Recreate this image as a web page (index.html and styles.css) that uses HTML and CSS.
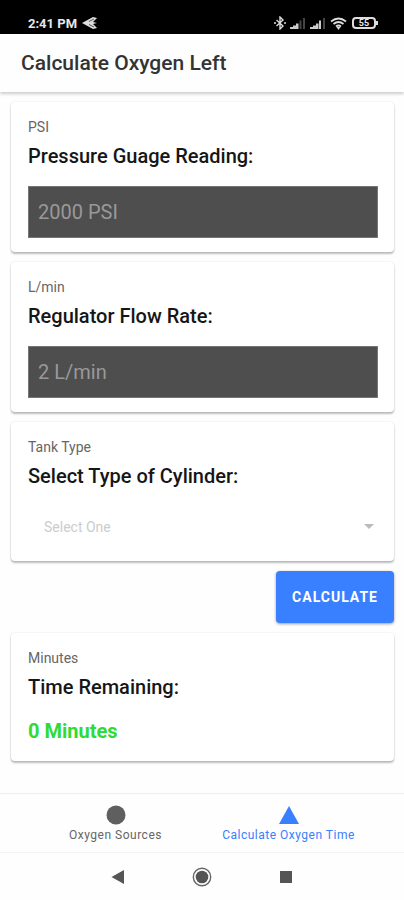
FILE: index.html
```html
<!DOCTYPE html>
<html lang="en">
<head>
<meta charset="utf-8">
<meta name="viewport" content="width=device-width, initial-scale=1">
<title>Calculate Oxygen Left</title>
<link rel="stylesheet" href="styles.css">
</head>
<body>
<div class="status">
  <span class="clock">2:41 PM</span>
  <svg class="plane" width="16" height="14" viewBox="0 0 16 14" aria-hidden="true"><path d="M0 7 11 1l4 1-4 4 4 1-4 1 4 4-4 1z" fill="#ddd"/><path d="M7 5.500 12 3M7 8.500 12 11" stroke="#555" stroke-width="1"/></svg>
  <div class="status-icons">
    <svg width="12" height="14" viewBox="0 0 12 14" aria-hidden="true"><path d="M2.500 4 9 10 6 13V1l3 3-6.500 6" fill="none" stroke="#ddd" stroke-width="1.400"/><path d="M0 7h2M10 7h2" stroke="#ddd" stroke-width="1.500"/></svg>
    <svg width="16" height="12" viewBox="0 0 16 12" aria-hidden="true"><path d="M0 12v-2h3v2zM3 12V8.500h3V12zM6 12V6.500h2.500V12z" fill="#ccc"/><path d="M9.500 12V3.500h2V12zM13 12V1h2v11z" fill="#444"/></svg>
    <svg width="16" height="12" viewBox="0 0 16 12" aria-hidden="true"><path d="M0 12v-2h3v2zM3 12V8.500h3V12zM6 12V6.500h2.500V12zM9 12V3.500h2V12z" fill="#ccc"/><path d="M13 12V1h2v11z" fill="#444"/></svg>
    <svg width="17" height="13" viewBox="0 0 17 13" aria-hidden="true"><path d="M1 4.500q7.500-6 15 0M3.500 7q5-4 10 0M6 9.500q2.500-2 5 0" fill="none" stroke="#ddd" stroke-width="1.800"/><path d="m6.500 10 2 3 2-3z" fill="#ddd"/></svg>
    <span class="battery">55</span>
  </div>
</div>
<header class="toolbar"><h1>Calculate Oxygen Left</h1></header>
<main>
  <section class="card">
    <p class="sub">PSI</p>
    <label class="title" for="psi">Pressure Guage Reading:</label>
    <input class="field" id="psi" type="text" inputmode="numeric" placeholder="2000 PSI">
  </section>
  <section class="card">
    <p class="sub">L/min</p>
    <label class="title" for="flow">Regulator Flow Rate:</label>
    <input class="field" id="flow" type="text" inputmode="numeric" placeholder="2 L/min">
  </section>
  <section class="card">
    <p class="sub">Tank Type</p>
    <label class="title" for="tank">Select Type of Cylinder:</label>
    <div class="select-row">
      <select id="tank"><option>Select One</option></select>
      <svg class="caret" width="10" height="5" viewBox="0 0 10 5" aria-hidden="true"><path d="M0 0h10L5 5z" fill="#bbb"/></svg>
    </div>
  </section>
  <button class="calculate" type="button">CALCULATE</button>
  <section class="card">
    <p class="sub">Minutes</p>
    <h2 class="title">Time Remaining:</h2>
    <output class="result" for="psi flow tank">0 Minutes</output>
  </section>
</main>
<nav class="tabs">
  <a class="tab" href="#sources">
    <svg width="20" height="20" viewBox="0 0 20 20" aria-hidden="true"><circle cx="10" cy="10" r="9.500" fill="#5f5f5f"/></svg>
    Oxygen Sources
  </a>
  <a class="tab active" href="#time">
    <svg width="20" height="20" viewBox="0 0 20 20" aria-hidden="true"><path d="M10 1 20 19H0z" fill="#3880ff"/></svg>
    Calculate Oxygen Time
  </a>
</nav>
<div class="system">
  <button type="button" aria-label="Back"><svg width="20" height="20" viewBox="0 0 20 20"><path d="M3.500 10 16 3v14z" fill="#555"/></svg></button>
  <button type="button" aria-label="Home"><svg width="20" height="20" viewBox="0 0 20 20"><circle cx="10" cy="10" r="8.700" fill="none" stroke="#666" stroke-width="1.400"/><circle cx="10" cy="10" r="6.300" fill="#555"/></svg></button>
  <button type="button" aria-label="Recent apps"><svg width="20" height="20" viewBox="0 0 20 20"><path d="M4 4h12v12H4z" fill="#555"/></svg></button>
</div>
</body>
</html>
```
FILE: styles.css
```css
* {
  box-sizing: border-box;
}

body {
  margin: 0;
  min-height: 100vh;
  display: flex;
  flex-direction: column;
  background: #fefefe;
  color: #161616;
  font-family: Roboto, "Liberation Sans", sans-serif;
}

h1, h2, p {
  margin: 0;
}

button {
  border: 0;
  font-family: inherit;
}

.status {
  height: 34px;
  padding: 12px 26px 0 28px;
  display: flex;
  align-items: center;
  background: #000;
  color: #e8e8e8;
}

.clock {
  font-size: 13px;
  font-weight: 700;
}

.plane {
  margin-left: 5px;
}

.status-icons {
  margin-left: auto;
  display: flex;
  align-items: center;
  gap: 4px;
}

.battery {
  position: relative;
  width: 24px;
  height: 12px;
  margin: 0 2px 0 1px;
  border: 2px solid #ddd;
  border-radius: 4px;
  font-size: 9px;
  font-weight: 700;
  line-height: 8px;
  text-align: center;
}

.battery::after {
  content: "";
  position: absolute;
  top: 2px;
  right: -4px;
  width: 2px;
  height: 4px;
  background: #ddd;
}

.toolbar {
  height: 58px;
  padding: 0 21px;
  display: flex;
  align-items: center;
  box-shadow: 0 2px 3px rgba(0, 0, 0, 0.2);
}

.toolbar h1 {
  color: #333;
  font-size: 21px;
  font-weight: 500;
}

main {
  flex: 1;
  padding: 10px 10px 0 11px;
  display: flex;
  flex-direction: column;
  gap: 10px;
}

.card {
  padding: 16px 16px 14px 17px;
  display: flex;
  flex-direction: column;
  border-radius: 4px;
  background: #fff;
  box-shadow: 0 2px 2px rgba(0, 0, 0, 0.25), 0 0 2px rgba(0, 0, 0, 0.12);
}

.sub {
  color: #666;
  font-size: 14px;
  line-height: 18px;
}

.title {
  margin-top: 8px;
  font-size: 20px;
  font-weight: 500;
  line-height: 24px;
}

.field {
  width: 100%;
  height: 52px;
  margin-top: 18px;
  padding: 0 9px;
  border: 1px solid #777;
  border-radius: 0;
  background: #4e4e4e;
  color: #fff;
  font-family: inherit;
  font-size: 20px;
}

.field::placeholder {
  color: #999;
}

.select-row {
  margin-top: 18px;
  padding: 0 4px 0 16px;
  display: flex;
  align-items: center;
}

.select-row select {
  flex: 1;
  height: 41px;
  padding: 0;
  appearance: none;
  border: 0;
  background: transparent;
  color: #ccc;
  font-family: inherit;
  font-size: 14px;
}

.calculate {
  align-self: flex-end;
  height: 52px;
  padding: 0 16px;
  border-radius: 4px;
  background: #3880ff;
  color: #fff;
  box-shadow: 0 1px 3px rgba(0, 0, 0, 0.4);
  font-size: 14px;
  font-weight: 700;
  letter-spacing: 1px;
}

.result {
  margin-top: 20px;
  padding-bottom: 4px;
  color: #2fdb35;
  font-size: 20px;
  font-weight: 700;
  line-height: 24px;
}

.tabs {
  height: 59px;
  display: flex;
  justify-content: center;
  border-top: 1px solid #eee;
}

.tab {
  flex: 1;
  max-width: 173px;
  padding-top: 11px;
  display: flex;
  flex-direction: column;
  align-items: center;
  gap: 3px;
  color: #666;
  font-size: 12px;
  line-height: 15px;
  letter-spacing: 0.5px;
  text-decoration: none;
}

.tab.active {
  color: #3880ff;
}

.system {
  height: 48px;
  display: flex;
  justify-content: center;
  align-items: center;
  gap: 64px;
  border-top: 1px solid #f4f4f4;
}

.system button {
  padding: 0;
  display: flex;
  background: none;
}
```
